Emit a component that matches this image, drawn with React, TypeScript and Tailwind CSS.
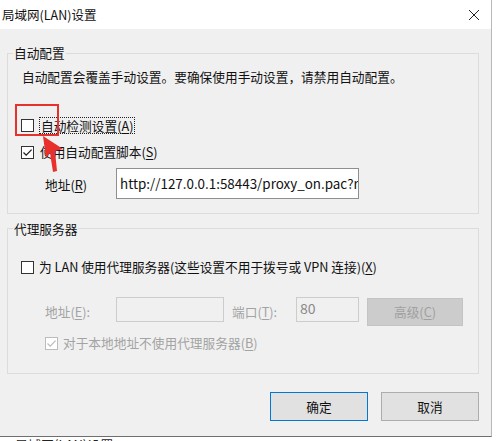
import React from "react";

function Box({ checked = false, disabled = false }: { checked?: boolean; disabled?: boolean }) {
  return (
    <div
      className={
        "w-[13px] h-[13px] shrink-0 border bg-white flex items-center justify-center " +
        (disabled ? "border-[#bcbcbc]" : "border-[#333333]")
      }
    >
      {checked && (
        <svg width="11" height="11" viewBox="0 0 11 11">
          <path
            d="M1.5 5.5 L4.2 8.2 L9.6 2.6"
            fill="none"
            stroke={disabled ? "#bcbcbc" : "#1a1a1a"}
            strokeWidth="1.2"
          />
        </svg>
      )}
    </div>
  );
}

function Acc({ c }: { c: string }) {
  return (
    <>
      (<span className="underline underline-offset-[2px] decoration-[1px]">{c}</span>)
    </>
  );
}

export default function App() {
  return (
    <div className="w-[500px] h-[441px] bg-white overflow-hidden relative font-['Noto_Sans_CJK_SC',sans-serif] text-[12.7px] text-[#111111]">
      <div className="w-[492px] h-[437px] flex flex-col border-r border-b border-r-[#b8b8b8] border-b-[#6f6f6f]">
        {/* title bar */}
        <div className="h-[29px] shrink-0 bg-white flex items-center justify-between">
          <span className="pl-[2px] text-[12.5px] leading-[18px] text-[#111111]">局域网(LAN)设置</span>
          <svg width="12" height="12" viewBox="0 0 12 12" className="mr-[11px]">
            <path d="M1 1 L11 11 M11 1 L1 11" stroke="#222222" strokeWidth="1" fill="none" />
          </svg>
        </div>

        {/* body */}
        <div className="flex-1 bg-[#f0f0f0] pt-[24px]">
          {/* group 1 */}
          <div className="ml-[7px] w-[472px] border border-[#dcdcdc] pb-[14px]">
            <div className="-mt-[10px] ml-[5px] px-[1px] w-fit bg-[#f0f0f0] leading-[18px]">自动配置</div>
            <div className="mt-[6px] ml-[14px] leading-[18px]">
              自动配置会覆盖手动设置。要确保使用手动设置，请禁用自动配置。
            </div>
            <div className="mt-[30px] ml-[13px] h-[18px] flex items-center">
              <Box />
              <div className="ml-[5px] px-[1px] h-[17px] leading-[15px] border border-dotted border-[#222222]">
                自动检测设置<Acc c="A" />
              </div>
            </div>
            <div className="mt-[9px] ml-[13px] h-[18px] flex items-center">
              <Box checked />
              <div className="ml-[6px] leading-[18px]">
                使用自动配置脚本<Acc c="S" />
              </div>
            </div>
            <div className="mt-[7px] ml-[37px] flex items-center">
              <div className="w-[71px] leading-[18px] pt-[2px]">
                地址<Acc c="R" />
              </div>
              <div className="w-[243px] h-[31px] bg-white border border-[#8f8f8f] overflow-hidden whitespace-nowrap pl-[3px] text-[13.4px] leading-[29px]">
                http://127.0.0.1:58443/proxy_on.pac?r
              </div>
            </div>
          </div>

          {/* group 2 */}
          <div className="mt-[14px] ml-[7px] w-[472px] border border-[#dcdcdc] pb-[21px]">
            <div className="-mt-[9px] ml-[5px] px-[1px] w-fit bg-[#f0f0f0] leading-[18px]">代理服务器</div>
            <div className="mt-[20px] ml-[13px] h-[18px] flex items-center">
              <Box />
              <div className="ml-[5px] leading-[18px]">
                为 LAN 使用代理服务器(这些设置不用于拨号或 VPN 连接)<Acc c="X" />
              </div>
            </div>
            <div className="mt-[21px] ml-[37px] flex items-start text-[#a3a3a3]">
              <div className="w-[71px] leading-[25px] pt-[2px]">
                地址<Acc c="E" />:
              </div>
              <div className="w-[108px] h-[25px] border border-[#cccccc] bg-[#f0f0f0]" />
              <div className="ml-[8px] w-[64px] leading-[25px] pt-[2px]">
                端口<Acc c="T" />:
              </div>
              <div className="w-[63px] h-[25px] border border-[#cccccc] bg-[#f0f0f0] pl-[3px] text-[14px] leading-[20px] text-[#8a8a8a]">
                80
              </div>
              <div className="ml-[8px] mt-[1px] w-[96px] h-[28px] bg-[#cccccc] border border-[#c4c4c4] flex items-center justify-center leading-[18px] text-[#a0a0a0]">
                高级<Acc c="C" />
              </div>
            </div>
            <div className="mt-[8px] ml-[37px] h-[18px] flex items-center text-[#a3a3a3]">
              <Box checked disabled />
              <div className="ml-[5px] leading-[18px]">
                对于本地地址不使用代理服务器<Acc c="B" />
              </div>
            </div>
          </div>

          {/* buttons */}
          <div className="mt-[18px] ml-[7px] w-[472px] flex justify-end gap-[13px]">
            <div className="w-[98px] h-[29px] bg-[#e1e1e1] border border-[#0078d7] flex items-center justify-center leading-[18px]">
              确定
            </div>
            <div className="w-[98px] h-[29px] bg-[#e1e1e1] border border-[#adadad] flex items-center justify-center leading-[18px]">
              取消
            </div>
          </div>
        </div>
      </div>

      {/* cut-off text below the dialog */}
      <div className="h-[4px] overflow-hidden pl-[15px]">
        <div className="-mt-[1px] text-[13px] leading-[18px] text-[#222222]">局域网(LAN)设置</div>
      </div>

      {/* red annotation */}
      <div className="absolute left-[15px] top-[104px] w-[44px] h-[32px] border-2 border-[#e8302c]" />
      <svg className="absolute left-0 top-0" width="500" height="441" viewBox="0 0 500 441">
        <polygon points="43,136 63,149 55,151 57,171 53,172 50,153 46,158" fill="#e8302c" />
      </svg>
    </div>
  );
}
